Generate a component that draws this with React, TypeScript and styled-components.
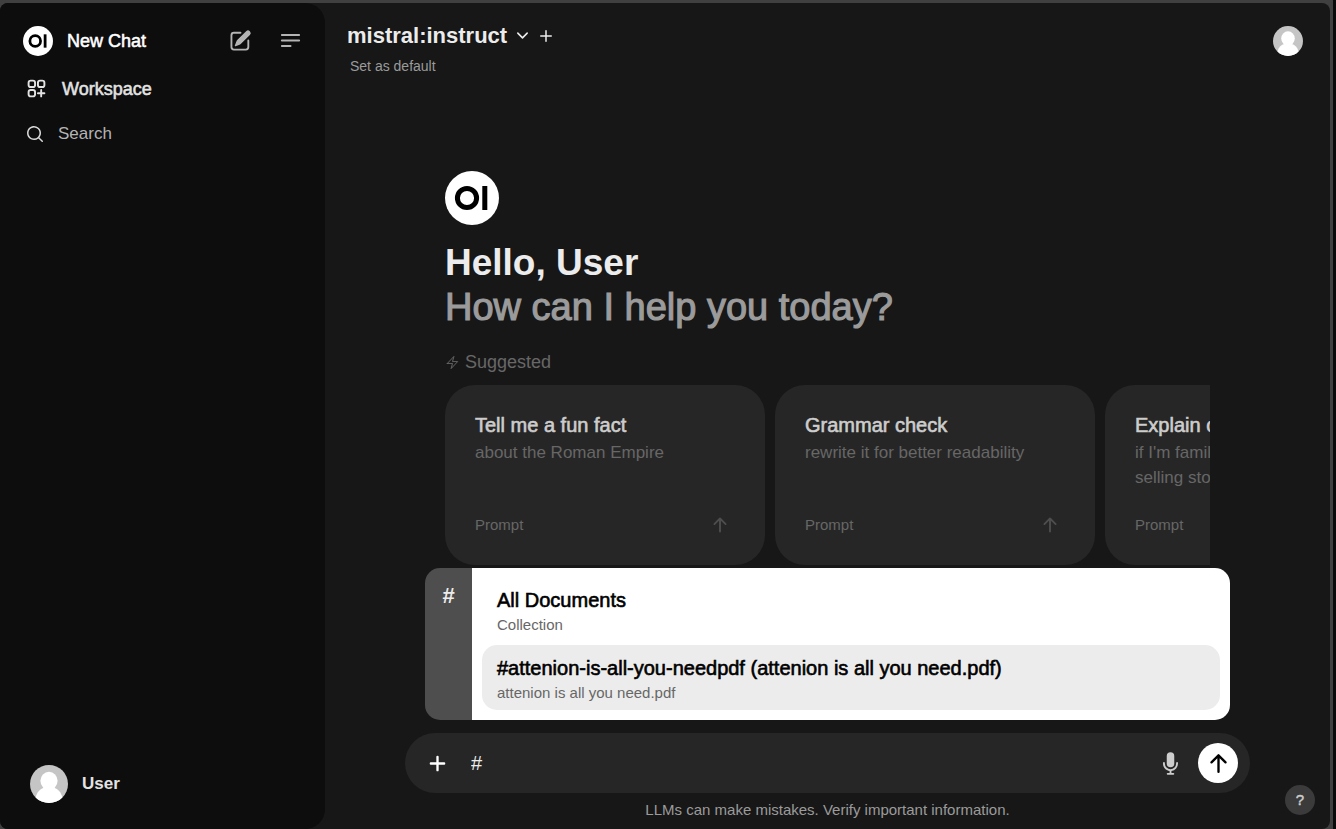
import React, { useState } from "react";
import styled, { createGlobalStyle, css } from "styled-components";

const GlobalStyle = createGlobalStyle`
  *, *::before, *::after { box-sizing: border-box; }
  body {
    margin: 0;
    background: #404040;
    color: #ececec;
    font-family: "Liberation Sans", Arial, sans-serif;
  }
  h1, h2, p { margin: 0; font-weight: 400; }
  button, input { font: inherit; color: inherit; }
  button { border: 0; padding: 0; background: none; cursor: pointer; text-align: left; }
  svg { display: block; flex: none; }
`;

/* The sans family has no medium cut, so a hairline outline gives the weight. */
const medium = css`
  -webkit-text-stroke: 0.03em currentColor;
`;

const Frame = styled.div`
  display: flex;
  min-height: 100vh;
  padding: 3px 3px 0 0;
  border-right: 3px solid #0a0a0a;
  background: #404040;
`;

const Shell = styled.div`
  display: flex;
  flex: 1;
  min-width: 0;
  border-radius: 8px;
  overflow: hidden;
  background: #171717;
`;

const Sidebar = styled.nav`
  display: flex;
  flex-direction: column;
  flex: 0 0 325px;
  padding: 12px 22px 25px 23px;
  border-radius: 0 20px 20px 0;
  background: #0d0d0d;
`;

const SidebarTop = styled.div`
  display: flex;
  align-items: center;
  height: 51px;
`;

const NewChat = styled.button`
  display: flex;
  align-items: center;
  flex: 1;
  gap: 14px;
  color: #fff;
  font-size: 18px;
  line-height: 24px;
  ${medium}
`;

const IconButton = styled.button<{ $tone?: string }>`
  display: flex;
  color: ${(p) => p.$tone ?? "#b4b4b4"};
`;

const TopActions = styled.div`
  display: flex;
  gap: 25px;
`;

const NavItem = styled.a`
  display: flex;
  align-items: center;
  gap: 14px;
  height: 45px;
  padding-left: 2px;
  color: #e3e3e3;
  font-size: 18px;
  line-height: 24px;
  text-decoration: none;
  ${medium}
`;

const SearchRow = styled.label`
  display: flex;
  align-items: center;
  gap: 13px;
  height: 45px;
  padding-left: 2px;
  color: #d8d8d8;
`;

const SearchInput = styled.input`
  flex: 1;
  min-width: 0;
  padding: 0;
  border: 0;
  outline: 0;
  background: transparent;
  font-size: 17px;
  line-height: 24px;
  &::placeholder { color: #b4b4b4; opacity: 1; }
`;

const Account = styled.button`
  display: flex;
  align-items: center;
  gap: 14px;
  height: 40px;
  margin-top: auto;
  padding-left: 7px;
  color: #e3e3e3;
  font-size: 17px;
  font-weight: 700;
  line-height: 24px;
`;

const Main = styled.main`
  position: relative;
  display: flex;
  flex-direction: column;
  flex: 1;
  min-width: 0;
`;

const Header = styled.header`
  display: flex;
  justify-content: space-between;
  align-items: flex-start;
  padding: 20px 27px 0 22px;
`;

const ModelRow = styled.div`
  display: flex;
  align-items: center;
  gap: 7px;
`;

const ModelButton = styled.button`
  display: flex;
  align-items: center;
  gap: 8px;
  font-size: 22px;
  font-weight: 700;
  line-height: 25px;
`;

const DefaultButton = styled.button`
  margin: 8px 0 0 3px;
  color: #9b9b9b;
  font-size: 14px;
  line-height: 20px;
`;

const ProfileButton = styled.button`
  margin-top: 3px;
`;

const Column = styled.div<{ $max: number }>`
  width: 100%;
  max-width: ${(p) => p.$max}px;
  margin: 0 auto;
`;

const Hero = styled(Column)`
  margin-top: auto;
  margin-bottom: 3px;
  overflow: hidden;
`;

const Greeting = styled.h1`
  margin-top: 15px;
  font-size: 37px;
  font-weight: 700;
  line-height: 45px;
`;

const Question = styled.h2`
  color: #9b9b9b;
  font-size: 38px;
  line-height: 45px;
  ${medium}
`;

const Suggested = styled.p`
  display: flex;
  align-items: center;
  gap: 5px;
  margin: 20px 0 10px;
  color: #676767;
  font-size: 18px;
  line-height: 25px;
`;

const Cards = styled.div`
  display: flex;
  gap: 10px;
`;

const Card = styled.button`
  display: flex;
  flex: 0 0 320px;
  flex-direction: column;
  justify-content: space-between;
  height: 180px;
  padding: 27px 35px 28px 30px;
  border-radius: 30px;
  background: #262626;
`;

const CardTitle = styled.span`
  display: block;
  margin-bottom: 1px;
  color: #cdcdcd;
  font-size: 20px;
  line-height: 27px;
  white-space: nowrap;
  ${medium}
`;

const CardText = styled.span`
  display: block;
  color: #676767;
  font-size: 17px;
  line-height: 25px;
`;

const CardFoot = styled.span`
  display: flex;
  align-items: center;
  justify-content: space-between;
  align-self: stretch;
  color: #676767;
  font-size: 15px;
  line-height: 25px;
`;

const CardArrow = styled.span`
  color: #4e4e4e;
`;

const Documents = styled(Column)`
  display: flex;
  margin-bottom: 13px;
  border-radius: 15px;
  overflow: hidden;
`;

const DocumentsMark = styled.div`
  flex: 0 0 47px;
  padding-top: 15px;
  background: #4e4e4e;
  font-size: 22px;
  font-weight: 700;
  line-height: 26px;
  text-align: center;
`;

const DocumentList = styled.div`
  display: flex;
  flex: 1;
  flex-direction: column;
  gap: 3px;
  min-width: 0;
  padding: 9px 10px 10px;
  background: #fff;
`;

const DocumentItem = styled.button<{ $active?: boolean }>`
  padding: 10px 15px 5px;
  border-radius: 15px;
  background: ${(p) => (p.$active ? "#ececec" : "transparent")};
`;

const DocumentTitle = styled.span`
  display: block;
  color: #000;
  font-size: 20px;
  line-height: 26px;
  ${medium}
`;

const DocumentNote = styled.span`
  display: block;
  color: #676767;
  font-size: 15px;
  line-height: 24px;
`;

const Composer = styled(Column).attrs({ as: "form" })`
  display: flex;
  align-items: center;
  height: 60px;
  padding: 0 12px 0 20px;
  border-radius: 30px;
  background: #262626;
`;

const MessageInput = styled.input`
  flex: 1;
  min-width: 0;
  padding: 0 21px;
  border: 0;
  outline: 0;
  background: transparent;
  font-size: 20px;
  line-height: 26px;
`;

const SendButton = styled.button`
  display: flex;
  align-items: center;
  justify-content: center;
  width: 40px;
  height: 40px;
  margin-left: 15px;
  border-radius: 50%;
  background: #fff;
  color: #000;
`;

const Disclaimer = styled.p`
  padding: 7px 0 9px;
  color: #9b9b9b;
  font-size: 15px;
  line-height: 20px;
  text-align: center;
`;

const HelpButton = styled.button`
  position: absolute;
  right: 15px;
  bottom: 14px;
  width: 30px;
  height: 30px;
  border-radius: 50%;
  background: #3b3b3b;
  color: #cdcdcd;
  font-size: 15px;
  line-height: 30px;
  text-align: center;
  ${medium}
`;

type StrokeProps = { d: string; size: number; width: number };

function StrokeIcon({ d, size, width }: StrokeProps) {
  return (
    <svg width={size} height={size} viewBox="0 0 24 24" fill="none" stroke="currentColor"
      strokeWidth={width} strokeLinecap="round" strokeLinejoin="round" aria-hidden="true">
      <path d={d} />
    </svg>
  );
}

function SolidIcon({ paths, size, box }: { paths: string[]; size: number; box: number }) {
  return (
    <svg width={size} height={size} viewBox={`0 0 ${box} ${box}`} fill="currentColor" aria-hidden="true">
      {paths.map((d) => <path key={d} d={d} />)}
    </svg>
  );
}

const icons = {
  menu: "M3.75 6.75h16.5M3.75 12h16.5m-16.5 5.25H12",
  workspace:
    "M13.5 16.875h3.375m0 0h3.375m-3.375 0V13.5m0 3.375v3.375M6 10.5h2.25a2.25 2.25 0 002.25-2.25V6a2.25 2.25 0 00-2.25-2.25H6A2.25 2.25 0 003.75 6v2.25A2.25 2.25 0 006 10.5zm0 9.75h2.25A2.25 2.25 0 0010.5 18v-2.25a2.25 2.25 0 00-2.25-2.25H6a2.25 2.25 0 00-2.25 2.25V18A2.25 2.25 0 006 20.25zm9.75-9.75H18a2.25 2.25 0 002.25-2.25V6A2.25 2.25 0 0018 3.75h-2.25A2.25 2.25 0 0013.5 6v2.25a2.25 2.25 0 002.25 2.25z",
  chevron: "M19.5 8.25l-7.5 7.5-7.5-7.5",
  plus: "M12 5v14m7-7H5",
  bolt: "M3.75 13.5l10.5-11.25L12 10.5h8.25L9.75 21.75 12 13.5H3.75z",
  edit: [
    "M5.433 13.917l1.262-3.155A4 4 0 017.58 9.42l6.92-6.918a2.121 2.121 0 013 3l-6.92 6.918c-.383.383-.84.685-1.343.886l-3.154 1.262a.5.5 0 01-.65-.65z",
    "M3.5 5.75c0-.69.56-1.25 1.25-1.25H10A.75.75 0 0010 3H4.75A2.75 2.75 0 002 5.75v9.5A2.75 2.75 0 004.75 18h9.5A2.75 2.75 0 0017 15.25V10a.75.75 0 00-1.5 0v5.25c0 .69-.56 1.25-1.25 1.25h-9.5c-.69 0-1.25-.56-1.25-1.25v-9.5z",
  ],
  search: [
    "M9 3.5a5.5 5.5 0 100 11 5.5 5.5 0 000-11zM2 9a7 7 0 1112.452 4.391l3.328 3.329a.75.75 0 11-1.06 1.06l-3.329-3.328A7 7 0 012 9z",
  ],
  arrow: [
    "M8 14a.75.75 0 0 1-.75-.75V4.56L4.03 7.78a.75.75 0 0 1-1.06-1.06l4.5-4.5a.75.75 0 0 1 1.06 0l4.5 4.5a.75.75 0 0 1-1.06 1.06L8.75 4.56v8.69A.75.75 0 0 1 8 14Z",
  ],
  add: [
    "M8.75 3.75a.75.75 0 0 0-1.5 0v3.5h-3.5a.75.75 0 0 0 0 1.5h3.5v3.5a.75.75 0 0 0 1.5 0v-3.5h3.5a.75.75 0 0 0 0-1.5h-3.5v-3.5Z",
  ],
  mic: [
    "M7 4a3 3 0 016 0v6a3 3 0 11-6 0V4z",
    "M5.5 9.643a.75.75 0 00-1.5 0V10c0 3.06 2.29 5.585 5.25 5.954V17.5h-1.5a.75.75 0 000 1.5h4.5a.75.75 0 000-1.5h-1.5v-1.546A6.001 6.001 0 0016 10v-.357a.75.75 0 00-1.5 0V10a4.5 4.5 0 01-9 0v-.357z",
  ],
};

function Logo({ size }: { size: number }) {
  return (
    <svg width={size} height={size} viewBox="0 0 54 54" aria-hidden="true">
      <circle cx="27" cy="27" r="27" fill="#fff" />
      <circle cx="22" cy="27" r="9.6" fill="none" stroke="#000" strokeWidth="5" />
      <rect x="37.3" y="15" width="5" height="24" fill="#000" />
    </svg>
  );
}

function Avatar({ size, id }: { size: number; id: string }) {
  return (
    <svg width={size} height={size} viewBox="0 0 38 38" aria-hidden="true">
      <clipPath id={id}><circle cx="19" cy="19" r="19" /></clipPath>
      <g clipPath={`url(#${id})`}>
        <rect width="38" height="38" fill="#c5c5c5" />
        <ellipse cx="19" cy="15.8" rx="8.6" ry="9" fill="#fff" />
        <path d="M5.5 38V33C7 27 10 23.500 15 22.500h8c5 1 8 4.500 9.500 10.500V38Z" fill="#fff" />
      </g>
    </svg>
  );
}

const prompts = [
  { title: "Tell me a fun fact", text: "about the Roman Empire" },
  { title: "Grammar check", text: "rewrite it for better readability" },
  { title: "Explain options trading", text: "if I'm familiar with buying and selling stocks" },
];

const documents = [
  { title: "All Documents", note: "Collection" },
  { title: "#attenion-is-all-you-needpdf (attenion is all you need.pdf)", note: "attenion is all you need.pdf" },
];

export default function App() {
  const [message, setMessage] = useState("#");
  const [active, setActive] = useState(1);

  return (
    <>
      <GlobalStyle />
      <Frame>
        <Shell>
          <Sidebar>
            <SidebarTop>
              <NewChat><Logo size={30} />New Chat</NewChat>
              <TopActions>
                <IconButton aria-label="Edit"><SolidIcon paths={icons.edit} size={25} box={20} /></IconButton>
                <IconButton aria-label="Menu"><StrokeIcon d={icons.menu} size={25} width={2} /></IconButton>
              </TopActions>
            </SidebarTop>
            <NavItem href="#workspace">
              <StrokeIcon d={icons.workspace} size={23} width={2} />
              Workspace
            </NavItem>
            <SearchRow>
              <SolidIcon paths={icons.search} size={20} box={20} />
              <SearchInput type="text" placeholder="Search" aria-label="Search" />
            </SearchRow>
            <Account><Avatar size={38} id="account-clip" />User</Account>
          </Sidebar>

          <Main>
            <Header>
              <div>
                <ModelRow>
                  <ModelButton>
                    mistral:instruct
                    <StrokeIcon d={icons.chevron} size={15} width={2.5} />
                  </ModelButton>
                  <IconButton aria-label="Add model" $tone="#ececec">
                    <StrokeIcon d={icons.plus} size={18} width={2} />
                  </IconButton>
                </ModelRow>
                <DefaultButton>Set as default</DefaultButton>
              </div>
              <ProfileButton aria-label="Profile"><Avatar size={30} id="profile-clip" /></ProfileButton>
            </Header>

            <Hero $max={765}>
              <Logo size={54} />
              <Greeting>Hello, User</Greeting>
              <Question>How can I help you today?</Question>
              <Suggested><StrokeIcon d={icons.bolt} size={15} width={1.5} />Suggested</Suggested>
              <Cards>
                {prompts.map((p) => (
                  <Card key={p.title}>
                    <span>
                      <CardTitle>{p.title}</CardTitle>
                      <CardText>{p.text}</CardText>
                    </span>
                    <CardFoot>
                      Prompt
                      <CardArrow><SolidIcon paths={icons.arrow} size={20} box={16} /></CardArrow>
                    </CardFoot>
                  </Card>
                ))}
              </Cards>
            </Hero>

            <Documents $max={805}>
              <DocumentsMark>#</DocumentsMark>
              <DocumentList>
                {documents.map((d, i) => (
                  <DocumentItem key={d.title} $active={i === active} onMouseEnter={() => setActive(i)}>
                    <DocumentTitle>{d.title}</DocumentTitle>
                    <DocumentNote>{d.note}</DocumentNote>
                  </DocumentItem>
                ))}
              </DocumentList>
            </Documents>

            <Composer $max={845}>
              <IconButton type="button" aria-label="Attach" $tone="#fff">
                <SolidIcon paths={icons.add} size={25} box={16} />
              </IconButton>
              <MessageInput aria-label="Message" value={message} onChange={(e) => setMessage(e.target.value)} />
              <IconButton type="button" aria-label="Record" $tone="#cdcdcd">
                <SolidIcon paths={icons.mic} size={25} box={20} />
              </IconButton>
              <SendButton type="button" aria-label="Send">
                <SolidIcon paths={icons.arrow} size={25} box={16} />
              </SendButton>
            </Composer>
            <Disclaimer>LLMs can make mistakes. Verify important information.</Disclaimer>
            <HelpButton aria-label="Help">?</HelpButton>
          </Main>
        </Shell>
      </Frame>
    </>
  );
}
